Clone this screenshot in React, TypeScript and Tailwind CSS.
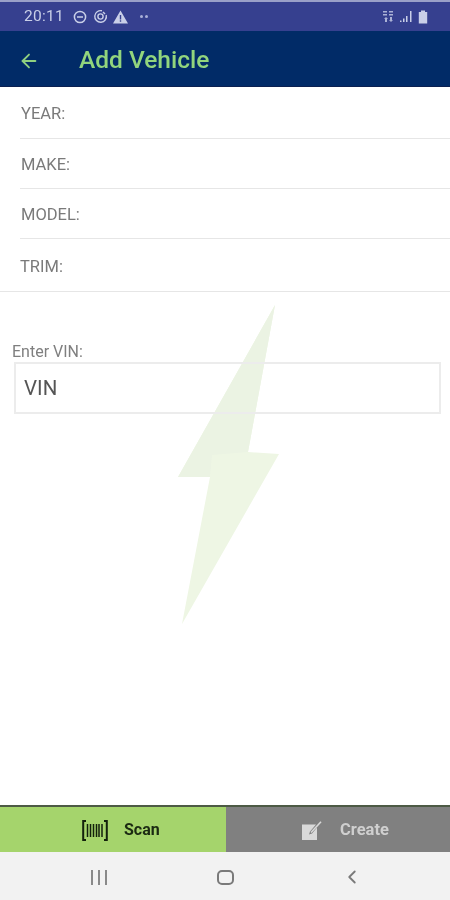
import { ArrowLeft, ChevronLeft } from "lucide-react";

const fields = [
  { label: "YEAR:", cls: "h-[51px] pl-[21px] pt-[4px]", line: "ml-[20px]" },
  { label: "MAKE:", cls: "h-[49px] pl-[21px] pt-[4px]", line: "ml-[20px]" },
  { label: "MODEL:", cls: "h-[49px] pl-[21px] pt-[4px]", line: "ml-[20px]" },
  { label: "TRIM:", cls: "h-[52px] pl-[20px] pt-[4px]", line: "" },
];

const StatusBar = () => (
  <div className="h-[31px] shrink-0 bg-[#36408f] border-t-2 border-[#9aa0c8] flex items-center pl-[24px] pr-[22px] text-[#c9cfe8]">
    <span className="text-[15.5px] leading-none tracking-[0.3px]">20:11</span>
    <svg className="ml-[9px]" width="14" height="14" viewBox="0 0 14 14" fill="none" stroke="currentColor" strokeWidth="1.5">
      <circle cx="7" cy="7" r="5.6" />
      <path d="M4 7h6" />
    </svg>
    <svg className="ml-[6px]" width="15" height="15" viewBox="0 0 15 15" fill="none" stroke="currentColor" strokeWidth="1.4">
      <path d="M9 1.8A5.8 5.8 0 1 0 13.2 6" />
      <circle cx="7.5" cy="7.5" r="2.6" />
      <path d="M10 3l2 2" />
    </svg>
    <svg className="ml-[5px]" width="15" height="14" viewBox="0 0 15 14" fill="currentColor">
      <path fillRule="evenodd" d="M7.5 0.5 15 13.5H0ZM6.8 5v4.5h1.4V5ZM6.8 10.3v1.5h1.4v-1.5Z" />
    </svg>
    <div className="ml-[12px] flex gap-[2px]">
      <span className="w-[3px] h-[3px] rounded-full bg-[#a9b0d8]" />
      <span className="w-[3px] h-[3px] rounded-full bg-[#a9b0d8]" />
    </div>
    <div className="ml-auto flex items-center gap-[5px]">
      <svg width="11" height="13" viewBox="0 0 11 13" fill="currentColor" opacity="0.8">
        <path d="M0 1h4v1.5H0zM6 1h4v1.5H6zM0 4h4v1.5H0zM6 4h4v1.5H6z" />
        <path d="M3 7l2 2H4v3H2V9H1zM8 12l-2-2h1V7h2v3h1z" />
      </svg>
      <svg width="13" height="13" viewBox="0 0 13 13" fill="currentColor" className="ml-[1px]">
        <path d="M0 10.5h1.5V12H0zM3 8.5h1.5V12H3zM6 6h1.5v6H6zM10 1h1.5v11H10z" />
      </svg>
      <svg width="10" height="14" viewBox="0 0 10 14" fill="currentColor">
        <path d="M3 0.5h4V2h2.2v11.5H0.8V2H3z" />
      </svg>
    </div>
  </div>
);

const AppBar = () => (
  <div className="h-[56px] shrink-0 bg-[#012b67] border-b border-[#0b2050] flex items-center pl-[18px] pt-[4px]">
    <ArrowLeft className="w-[22px] h-[22px] text-[#8fd080]" strokeWidth={2} />
    <span className="ml-[39px] text-[24.5px] font-medium text-[#92d57d] leading-none">Add Vehicle</span>
  </div>
);

const ScanIcon = () => (
  <svg width="26" height="21" viewBox="0 0 26 21" fill="none" stroke="#13210c">
    <path d="M4 1H1.2v19H4M22 1h2.8v19H22" strokeWidth="2" />
    <path d="M5.5 4v13M8.5 4v13M11.5 4v13M14.5 4v13M17 4v13M20 4v13" strokeWidth="1.5" />
  </svg>
);

const CreateIcon = () => (
  <svg width="20" height="19" viewBox="0 0 20 19">
    <path d="M0 3.5h14l-6 7-1 3 3-1 5-6v12.5H0Z" fill="#d9d9d9" />
    <path d="M9 11.5 19 0.8" stroke="#d9d9d9" strokeWidth="1.6" />
  </svg>
);

export default function App() {
  return (
    <div className="relative w-[450px] h-[900px] flex flex-col bg-white overflow-hidden font-['Roboto',sans-serif] blur-[0.4px]">
      <StatusBar />
      <AppBar />

      <div className="relative flex-1 flex flex-col">
        {/* logo watermark behind the form */}
        <svg className="absolute left-[170px] top-[213px] pointer-events-none" width="120" height="325" viewBox="170 300 120 325">
          <path d="M275 305 248 452 279 454 182 624 210 477 178 477Z" fill="#eef6e4" />
          <path d="M275 305 248 452 212 455 210 477 178 477Z" fill="#ebf3e3" />
        </svg>

        <div className="relative flex flex-col">
          {fields.map((f) => (
            <div key={f.label}>
              <div className={`${f.cls} flex items-center text-[16.5px] text-[#7a7a7a]`}>{f.label}</div>
              <div className={`${f.line} h-px bg-[#e6e6e6]`} />
            </div>
          ))}
        </div>

        <div className="relative mt-[51px] pl-[12px] pr-[9px]">
          <div className="text-[16px] leading-[17px] text-[#7f7f7f]">Enter VIN:</div>
          <div className="mt-[2px] ml-[2px] h-[52px] border-2 border-[#ececec] flex items-center pl-[8px] text-[20.5px] text-[#555555]">
            VIN
          </div>
        </div>

        <div className="relative mt-auto h-[47px] flex border-t-2 border-[#4d5a45]">
          <div className="w-[226px] bg-[#a5d46c] flex items-center pl-[82px] gap-[16px] pt-[1px]">
            <ScanIcon />
            <span className="text-[16px] font-bold text-[#1b2a12]">Scan</span>
          </div>
          <div className="flex-1 bg-[#808080] flex items-center pl-[76px] gap-[18px] pt-[1px]">
            <CreateIcon />
            <span className="text-[16.5px] font-bold text-[#cfcfcf]">Create</span>
          </div>
        </div>
      </div>

      <div className="h-[48px] shrink-0 bg-[#f2f2f2] flex items-center text-[#7a7a7a] pt-[2px] pl-[91px]">
        <div className="flex gap-[5px]">
          <span className="w-[2px] h-[15px] bg-[#8a8a8a]" />
          <span className="w-[2px] h-[15px] bg-[#8a8a8a]" />
          <span className="w-[2px] h-[15px] bg-[#8a8a8a]" />
        </div>
        <span className="ml-[110px] w-[17px] h-[15px] rounded-[5px] border-2 border-[#7a7a7a]" />
        <ChevronLeft className="ml-[107px] w-[22px] h-[22px]" strokeWidth={2} />
      </div>
    </div>
  );
}
